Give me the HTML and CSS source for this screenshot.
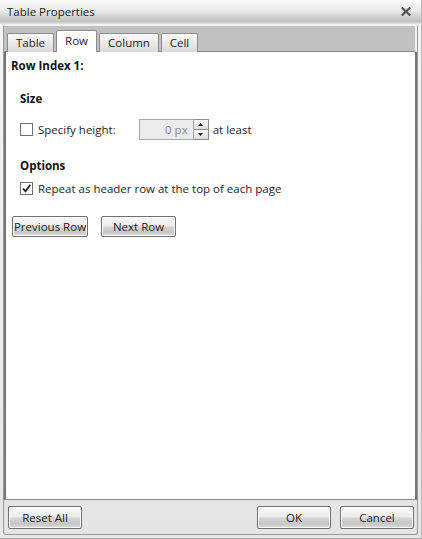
FILE: index.html
```html
<!DOCTYPE html>
<html>
<head>
<meta charset="utf-8">
<link rel="stylesheet" href="styles.css">
</head>
<body>
<div class="window">
  <div class="titlebar">
    <span class="title">Table Properties</span>
    <svg class="close" width="10" height="9" viewBox="0 0 10 9"><path d="M1.5 1.2 L8.5 7.8 M8.5 1.2 L1.5 7.8" stroke="#555" stroke-width="2.2" stroke-linecap="square"/></svg>
  </div>
  <div class="panel">
    <div class="tabstrip">
      <div class="tab t-table">Table</div>
      <div class="tab active t-row">Row</div>
      <div class="tab t-col">Column</div>
      <div class="tab t-cell">Cell</div>
    </div>
    <div class="content">
      <div class="heading row-index">Row Index 1:</div>
      <div class="section">
        <div class="heading">Size</div>
        <div class="line size-line">
          <span class="check"></span>
          <span class="label">Specify height:</span>
          <div class="numeric">
            <div class="num-box">0 px</div>
            <div class="spin">
              <div class="spin-btn"><svg width="5" height="3" viewBox="0 0 5 3"><path d="M0 3 L2.5 0 L5 3 Z" fill="#222"/></svg></div>
              <div class="spin-btn"><svg width="5" height="3" viewBox="0 0 5 3"><path d="M0 0 L2.5 3 L5 0 Z" fill="#222"/></svg></div>
            </div>
          </div>
          <span class="after">at least</span>
        </div>
        <div class="heading options">Options</div>
        <div class="line opt-line">
          <span class="check checked"><svg width="11" height="11" viewBox="0 0 11 11"><path d="M2 5.5 L4.5 8.3 L9.3 1.8" fill="none" stroke="#222" stroke-width="1.8"/></svg></span>
          <span class="label">Repeat as header row at the top of each page</span>
        </div>
      </div>
      <div class="nav">
        <button class="btn prev">Previous Row</button>
        <button class="btn next">Next Row</button>
      </div>
    </div>
    <div class="footer">
      <button class="btn reset">Reset All</button>
      <div class="spacer"></div>
      <button class="btn ok">OK</button>
      <button class="btn cancel">Cancel</button>
    </div>
  </div>
</div>
</body>
</html>
```
FILE: styles.css
```css
html, body {
  margin: 0;
  padding: 0;
  background: #ffffff;
}
body {
  font-family: "Open Sans", "Noto Sans", sans-serif;
  font-size: 11.5px;
  color: #1e1e1e;
}
.window {
  width: 422px;
  height: 539px;
  box-sizing: border-box;
  display: flex;
  flex-direction: column;
  background: linear-gradient(#f4f4f4 0%, #e6e6e6 100%);
  border-right: 1px solid #b8b8b8;
  border-bottom: 1px solid #a8a8a8;
}
.titlebar {
  height: 24px;
  flex: none;
  display: flex;
  align-items: center;
  padding: 0 10px 0 7px;
  background: linear-gradient(#fbfbfb 0%, #ececec 40%, #cdcdcd 75%, #c2c2c2 90%, #e6e6e6 100%);
}
.title {
  flex: 1;
  font-size: 11.5px;
  color: #222;
  margin-top: -2px;
}
.close {
  margin-top: -1px;
}
.panel {
  flex: 1;
  display: flex;
  flex-direction: column;
  margin: 1px 3px 3px 3px;
  border: 1px solid #9a9a9a;
  border-top-color: #f4f4f4;
  border-radius: 0 0 3px 3px;
  background: linear-gradient(#f2f2f2 0%, #e4e4e4 100%);
}
.tabstrip {
  height: 26px;
  flex: none;
  box-sizing: border-box;
  display: flex;
  align-items: flex-end;
  padding-left: 3px;
  background: #c1c1c1;
  border-bottom: 1px solid #8a8a8a;
  margin-right: 1px;
  border-right: 1px solid #f0f0f0;
}
.tab {
  box-sizing: border-box;
  height: 19px;
  margin-bottom: -1px;
  margin-right: 2px;
  border: 1px solid #8a8a8a;
  border-bottom: none;
  border-radius: 2px 2px 0 0;
  background: linear-gradient(#fafafa 0%, #e9e9e9 50%, #d9d9d9 100%);
  display: flex;
  align-items: center;
  justify-content: center;
  font-size: 11.5px;
  color: #222;
  padding-bottom: 1px;
}
.tab.active {
  height: 22px;
  background: #ffffff;
  padding-bottom: 3px;
  position: relative;
  z-index: 1;
}
.t-table { width: 47px; }
.t-row { width: 41px; }
.t-col { width: 60px; }
.t-cell { width: 37px; }
.content {
  flex: 1;
  background: #ffffff;
  border-left: 2px solid #757575;
  border-right: 2px solid #757575;
  border-bottom: 1px solid #8c8c8c;
  padding: 6px 0 0 5px;
}
.heading {
  font-weight: bold;
  font-size: 11.5px;
  color: #111;
  line-height: 16px;
}
.section {
  padding-left: 9px;
}
.section > .heading:first-child {
  margin-top: 17px;
}
.line {
  display: flex;
  align-items: center;
  height: 22px;
}
.size-line {
  margin-top: 11px;
}
.check {
  width: 13px;
  height: 13px;
  box-sizing: border-box;
  border: 1px solid #707070;
  background: #fff;
  display: flex;
  align-items: center;
  justify-content: center;
  flex: none;
}
.label {
  margin-left: 5px;
  color: #1e1e1e;
}
.numeric {
  margin-left: 23px;
  display: flex;
  height: 21px;
}
.num-box {
  width: 55px;
  box-sizing: border-box;
  border: 1px solid #a8a8a8;
  background: #ebebeb;
  color: #8a8a8a;
  text-align: right;
  padding-right: 5px;
  line-height: 19px;
}
.spin {
  width: 15px;
  display: flex;
  flex-direction: column;
}
.spin-btn {
  flex: 1;
  box-sizing: border-box;
  border: 1px solid #8c8c8c;
  border-left: none;
  background: linear-gradient(#fbfbfb, #dcdcdc);
  display: flex;
  align-items: center;
  justify-content: center;
}
.spin-btn + .spin-btn {
  border-top: none;
}
.after {
  margin-left: 4px;
}
.options {
  margin-top: 18px;
}
.opt-line {
  margin-top: 3px;
}
.nav {
  display: flex;
  gap: 13px;
  margin-top: 17px;
  padding-left: 1px;
}
.btn {
  font-family: "Open Sans", "Noto Sans", sans-serif;
  font-size: 11.5px;
  color: #222;
  box-sizing: border-box;
  height: 21px;
  padding: 0;
  border: 1px solid #707070;
  border-radius: 2px;
  background: linear-gradient(#f8f8f8 0%, #ececec 45%, #d2d2d2 55%, #c6c6c6 80%, #dedede 100%);
  box-shadow: inset 0 0 0 1px #fbfbfb;
}
.prev { width: 76px; }
.next { width: 75px; }
.footer {
  height: 34px;
  flex: none;
  display: flex;
  align-items: center;
  padding: 0 3px 0 4px;
  gap: 9px;
}
.footer .btn {
  height: 23px;
  width: 74px;
}
.spacer { flex: 1; }
```
